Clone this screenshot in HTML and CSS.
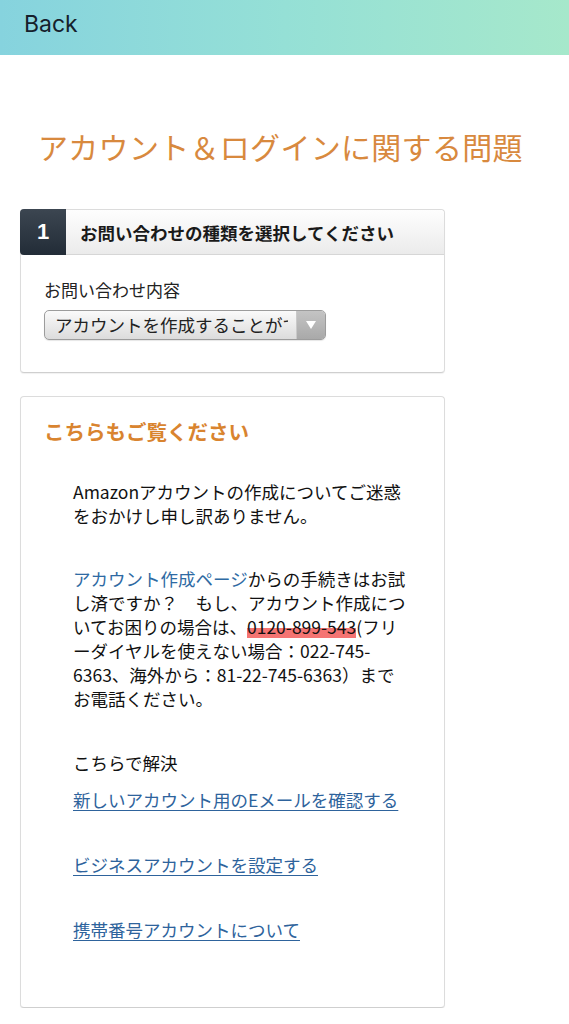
FILE: index.html
```html
<!DOCTYPE html>
<html lang="ja">
<head>
<meta charset="utf-8">
<title>アカウント＆ログインに関する問題</title>
<link rel="stylesheet" href="styles.css">
</head>
<body>
<header class="topbar"><span class="back">Back</span></header>
<main class="page">
  <h1 class="title">アカウント＆ログインに関する問題</h1>

  <section class="card step-card">
    <div class="step-head">
      <div class="step-num">1</div>
      <div class="step-title">お問い合わせの種類を選択してください</div>
    </div>
    <div class="step-body">
      <div class="field-label">お問い合わせ内容</div>
      <div class="select">
        <div class="select-text"><span>アカウントを作成することができない</span></div>
        <div class="select-arrow"><svg width="10" height="8" viewBox="0 0 10 8"><path d="M0 0 L10 0 L5 8 Z" fill="#fff"/></svg></div>
      </div>
    </div>
  </section>

  <section class="card info-card">
    <h2 class="info-title">こちらもご覧ください</h2>
    <div class="info-body">
      <p class="para">Amazonアカウントの作成についてご迷惑をおかけし申し訳ありません。</p>
      <p class="para"><a class="inline-link">アカウント作成ページ</a>からの手続きはお試し済ですか？　もし、アカウント作成についてお困りの場合は、<span class="mark">0120-899-543</span>(フリーダイヤルを使えない場合：022-745-<br>6363、海外から：81-22-745-6363）まで<br>お電話ください。</p>
      <p class="solve">こちらで解決</p>
      <ul class="links">
        <li><a class="link">新しいアカウント用のEメールを確認する</a></li>
        <li><a class="link">ビジネスアカウントを設定する</a></li>
        <li><a class="link">携帯番号アカウントについて</a></li>
      </ul>
    </div>
  </section>
</main>
</body>
</html>
```
FILE: styles.css
```css
* { box-sizing: border-box; }
html, body { margin: 0; padding: 0; background: #fff; }
body {
  font-family: "Noto Sans CJK JP", "Noto Sans", sans-serif;
  color: #111;
}
.topbar {
  height: 55px;
  display: flex;
  align-items: center;
  padding-left: 24px;
  background: linear-gradient(90deg, #86d3de 0%, #95e0d6 50%, #a6e8cb 100%);
}
.back {
  font-family: Inter, "Liberation Sans", sans-serif;
  font-size: 23px;
  color: #15202b;
  position: relative;
  top: -4px;
}
.page { padding: 0 0 0 20px; }
.title {
  margin: 73px 0 45px 18px;
  font-size: 30px;
  line-height: 36px;
  font-weight: 400;
  color: #d8893e;
  letter-spacing: 0.3px;
}
.card {
  width: 425px;
  border: 1px solid #dcdcdc;
  border-bottom-color: #cfcfcf;
  border-radius: 4px;
  background: #fff;
  box-shadow: 0 1px 1px rgba(0,0,0,0.06);
}
.step-head {
  display: flex;
  height: 45px;
  background: linear-gradient(#fefefe, #ebebeb);
  border-bottom: 1px solid #d6d6d6;
  border-radius: 4px 4px 0 0;
}
.step-num {
  width: 46px;
  margin: -1px 0 -1px -1px;
  background: linear-gradient(#3c4651, #222c37);
  color: #fff;
  font-family: "Liberation Sans", Arial, sans-serif;
  font-weight: 700;
  font-size: 22px;
  display: flex;
  align-items: center;
  justify-content: center;
  border-radius: 4px 0 0 4px;
}
.step-title {
  display: flex;
  align-items: center;
  padding-left: 14px;
  font-size: 17.5px;
  font-weight: 700;
  color: #1a1a1a;
}
.step-body { padding: 23px 23px 32px 23px; }
.field-label {
  font-size: 17px;
  line-height: 24px;
  color: #222;
}
.select {
  margin-top: 8px;
  width: 282px;
  height: 30px;
  display: flex;
  border: 1px solid #9c9c9c;
  border-radius: 5px;
  overflow: hidden;
  background: linear-gradient(#fafafa, #dcdcdc);
  box-shadow: 0 1px 1px rgba(0,0,0,0.1);
}
.select-text {
  width: 251px;
  padding-left: 10px;
  display: flex;
  align-items: center;
  overflow: hidden;
}
.select-text span {
  display: block;
  width: 233px;
  overflow: hidden;
  white-space: nowrap;
  font-size: 17.5px;
  color: #222;
  line-height: 28px;
}
.select-arrow {
  flex: 1;
  display: flex;
  align-items: center;
  justify-content: center;
  background: linear-gradient(#c4c4c4, #a9a9a9);
  border-left: 1px solid #c9c9c9;
}
.info-card {
  margin-top: 23px;
  padding: 20px 23px 65px 23px;
}
.info-title {
  margin: 0;
  font-size: 20.5px;
  line-height: 28px;
  font-weight: 700;
  color: #d9842f;
}
.info-body {
  margin: 35px 0 0 29px;
  width: 338px;
  font-size: 17.5px;
  line-height: 24px;
}
.para { margin: 0 0 39px 0; }
.inline-link { color: #2e6aa3; text-decoration: none; }
.mark {
  background: linear-gradient(to bottom, transparent 55%, rgba(243, 92, 90, 0.85) 55%, rgba(243, 92, 90, 0.85) 95%, transparent 95%);
}
.solve { margin: 40px 0 13px 0; }
.links { list-style: none; margin: 0; padding: 0; }
.links li + li { margin-top: 41px; }
.link {
  color: #2e639c;
  text-decoration: underline;
  text-underline-offset: 3px;
}
```
